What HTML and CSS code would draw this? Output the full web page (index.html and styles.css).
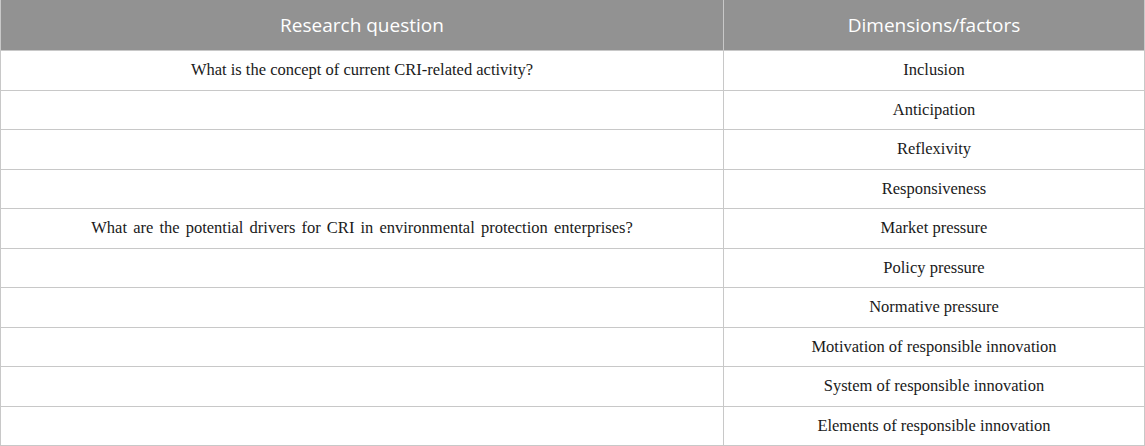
FILE: index.html
```html
<!DOCTYPE html>
<html>
<head>
<meta charset="utf-8">
<link rel="stylesheet" href="styles.css">
</head>
<body>
<table class="data">
  <thead>
    <tr><th class="col-q">Research question</th><th class="col-d">Dimensions/factors</th></tr>
  </thead>
  <tbody>
    <tr><td>What is the concept of current CRI-related activity?</td><td>Inclusion</td></tr>
    <tr><td></td><td>Anticipation</td></tr>
    <tr><td></td><td>Reflexivity</td></tr>
    <tr><td></td><td>Responsiveness</td></tr>
    <tr><td class="wide">What are the potential drivers for CRI in environmental protection enterprises?</td><td>Market pressure</td></tr>
    <tr><td></td><td>Policy pressure</td></tr>
    <tr><td></td><td>Normative pressure</td></tr>
    <tr><td></td><td>Motivation of responsible innovation</td></tr>
    <tr><td></td><td>System of responsible innovation</td></tr>
    <tr><td></td><td>Elements of responsible innovation</td></tr>
  </tbody>
</table>
</body>
</html>
```
FILE: styles.css
```css
html, body {
  margin: 0;
  padding: 0;
  background: #ffffff;
}
.data {
  width: 1145px;
  border-collapse: collapse;
  table-layout: fixed;
}
.data th {
  background: #929292;
  color: #ffffff;
  font-family: "Open Sans", "Liberation Sans", sans-serif;
  font-weight: 400;
  font-size: 19px;
  height: 50px;
  padding: 0;
  text-align: center;
  vertical-align: middle;
  border-left: 1px solid #c8c8c8;
  border-right: 1px solid #c8c8c8;
}
.data .col-q { width: 722px; }
.data td {
  font-family: "Liberation Serif", "Times New Roman", serif;
  font-size: 16.5px;
  color: #1a1a1a;
  height: 38.5px;
  padding: 0;
  text-align: center;
  vertical-align: middle;
  border: 1px solid #c8c8c8;
}
.data td.wide {
  word-spacing: 2px;
}
```
